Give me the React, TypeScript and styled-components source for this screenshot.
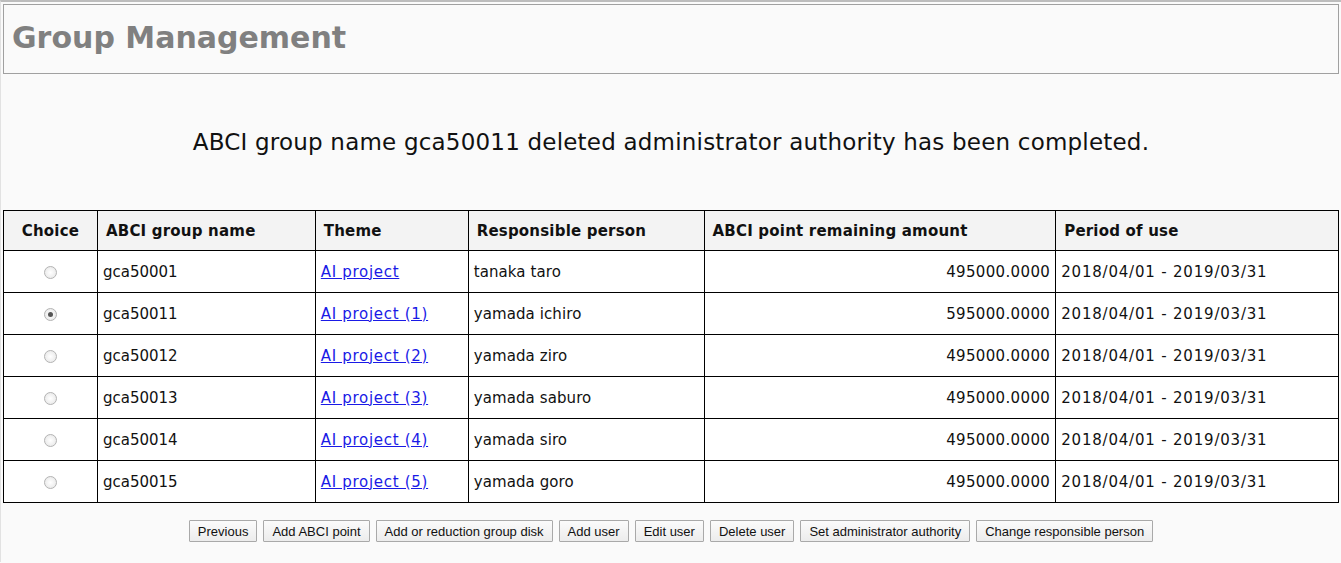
import React from "react";
import styled, { createGlobalStyle } from "styled-components";

const Global = createGlobalStyle`
  html, body { margin: 0; padding: 0; background: #fafafa; }
  body { font-family: "DejaVu Sans", Verdana, sans-serif; color: #111; }
`;

const Page = styled.div`
  border-top: 2px solid #bdbdbd;
  border-left: 1px solid #e2e2e2;
  padding: 2px 2px 20px 2px;
  min-height: 561px;
  box-sizing: border-box;
`;

const Header = styled.header`
  border: 1px solid #a0a0a0;
  height: 68px;
  display: flex;
  align-items: center;
  padding: 0 8px 4px;
  box-sizing: border-box;
  height: 70px;
`;

const Title = styled.h1`
  margin: 0;
  font-size: 30px;
  font-weight: bold;
  color: #808080;
`;

const Message = styled.p`
  margin: 48px 0 0;
  text-align: center;
  font-size: 23px;
  letter-spacing: 0.2px;
  line-height: 40px;
  height: 88px;
  color: #111;
`;

const Table = styled.table`
  width: 1336px;
  border-collapse: collapse;
  background: #fff;
  font-size: 15px;
`;

const Th = styled.th<{ $w: number; $center?: boolean }>`
  width: ${(p) => p.$w}px;
  height: 40px;
  border: 1px solid #000;
  background: #f3f3f3;
  text-align: ${(p) => (p.$center ? "center" : "left")};
  padding: 0 8px;
  font-weight: bold;
  letter-spacing: 0.2px;
  box-sizing: border-box;
`;

const Td = styled.td<{ $align?: string; $spacing?: number }>`
  height: 42px;
  border: 1px solid #000;
  padding: 0 5px;
  text-align: ${(p) => p.$align || "left"};
  letter-spacing: ${(p) => p.$spacing || 0}px;
  box-sizing: border-box;
`;

const Radio = styled.span<{ $checked?: boolean }>`
  display: inline-block;
  width: 11px;
  height: 11px;
  border-radius: 50%;
  border: 1px solid #b4b4b4;
  background: radial-gradient(circle, #fff 0%, #e4e4e4 100%);
  position: relative;
  vertical-align: middle;
  &::after {
    content: "";
    display: ${(p) => (p.$checked ? "block" : "none")};
    position: absolute;
    left: 3px;
    top: 3px;
    width: 5px;
    height: 5px;
    border-radius: 50%;
    background: #555;
  }
`;

const Link = styled.a`
  color: #1a1ae6;
  text-decoration: underline;
  letter-spacing: 0.7px;
`;

const Buttons = styled.div`
  display: flex;
  justify-content: center;
  gap: 6px;
  margin-top: 17px;
`;

const Button = styled.button`
  font-family: "Liberation Sans", Arial, sans-serif;
  font-size: 13px;
  height: 22px;
  padding: 0 8px;
  background: linear-gradient(#fbfbfb, #ececec);
  border: 1px solid #a9a9a9;
  border-radius: 1px;
  color: #111;
`;

const rows = [
  ["gca50001", "AI project", "tanaka taro", "495000.0000", false],
  ["gca50011", "AI project (1)", "yamada ichiro", "595000.0000", true],
  ["gca50012", "AI project (2)", "yamada ziro", "495000.0000", false],
  ["gca50013", "AI project (3)", "yamada saburo", "495000.0000", false],
  ["gca50014", "AI project (4)", "yamada siro", "495000.0000", false],
  ["gca50015", "AI project (5)", "yamada goro", "495000.0000", false],
] as const;

const buttons = [
  "Previous",
  "Add ABCI point",
  "Add or reduction group disk",
  "Add user",
  "Edit user",
  "Delete user",
  "Set administrator authority",
  "Change responsible person",
];

export default function App() {
  return (
    <>
      <Global />
      <Page>
        <Header>
          <Title>Group Management</Title>
        </Header>
        <Message>
          ABCI group name gca50011 deleted administrator authority has been completed.
        </Message>
        <Table>
          <thead>
            <tr>
              <Th $w={94} $center>Choice</Th>
              <Th $w={218}>ABCI group name</Th>
              <Th $w={153}>Theme</Th>
              <Th $w={236}>Responsible person</Th>
              <Th $w={352}>ABCI point remaining amount</Th>
              <Th $w={283}>Period of use</Th>
            </tr>
          </thead>
          <tbody>
            {rows.map(([g, t, p, a, c]) => (
              <tr key={g}>
                <Td $align="center">
                  <Radio $checked={c} />
                </Td>
                <Td>{g}</Td>
                <Td>
                  <Link href="#">{t}</Link>
                </Td>
                <Td $spacing={0.1}>{p}</Td>
                <Td $align="right" $spacing={0.35}>{a}</Td>
                <Td $spacing={0.8}>2018/04/01 - 2019/03/31</Td>
              </tr>
            ))}
          </tbody>
        </Table>
        <Buttons>
          {buttons.map((b) => (
            <Button key={b}>{b}</Button>
          ))}
        </Buttons>
      </Page>
    </>
  );
}
